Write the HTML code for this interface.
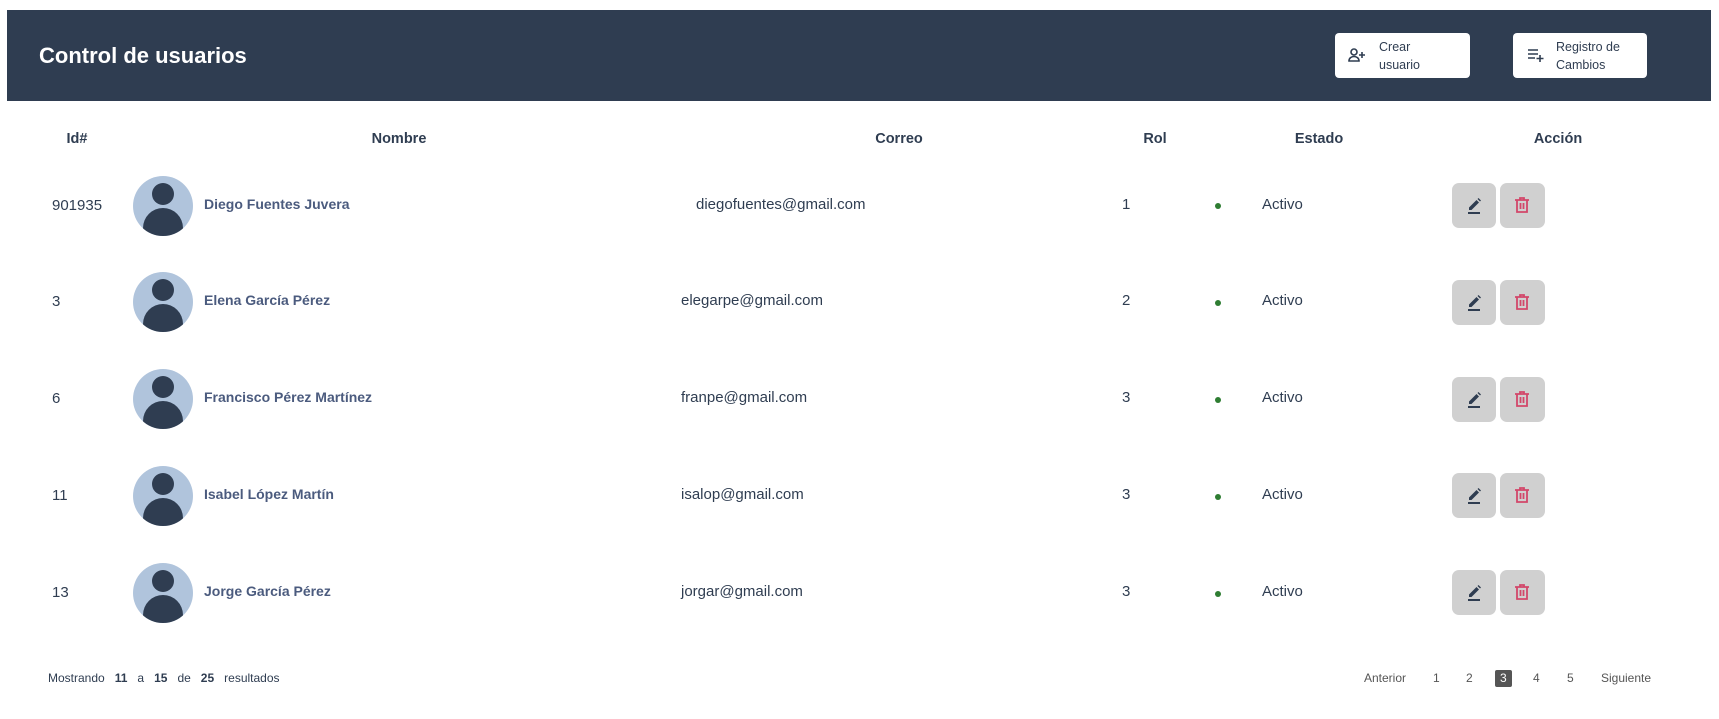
<!DOCTYPE html>
<html><head><meta charset="utf-8"><style>
*{margin:0;padding:0;box-sizing:border-box}
body{width:1719px;height:719px;background:#fff;font-family:"Liberation Sans",sans-serif;color:#2f3d51;position:relative;overflow:hidden}
.a{position:absolute;white-space:nowrap}
.hdr{left:7px;top:10px;width:1704px;height:91px;background:#2f3d51}
.title{left:39px;top:43px;font-size:22px;font-weight:bold;color:#fff}
.btn{background:#fff;border-radius:4px;height:45px;top:33px}
.btn span{position:absolute;font-size:12.5px;line-height:18px;color:#2f3d51}
.th{top:131px;font-size:14.5px;font-weight:bold;transform:translateX(-50%)}
.td{font-size:15px;color:#2f3d51}
.nm{font-size:14px;font-weight:bold;color:#4b5b7e}
.av{width:60px;height:60px;border-radius:50%;background:#b0c4dc;overflow:hidden}
.av:before{content:"";position:absolute;left:19px;top:7px;width:22px;height:22px;border-radius:50%;background:#2f3d51}
.av:after{content:"";position:absolute;left:10px;top:32px;width:40px;height:40px;border-radius:50%;background:#2f3d51}
.dot{width:6px;height:6px;border-radius:50%;background:#2e7d32}
.ab{width:44px;height:45px;background:#d0d0d0;border-radius:7px}
.ab svg{position:absolute;left:12px;top:12px}
.ft{top:671px;font-size:12px;color:#2f3d51}
</style></head><body>
<div class="a hdr"></div>
<div class="a title">Control de usuarios</div>
<div class="a btn" style="left:1335px;width:135px">
<svg class="a" style="left:13px;top:14px" width="18" height="16" viewBox="0 0 18 16"><circle cx="6" cy="5" r="3" fill="none" stroke="#2f3d51" stroke-width="1.6"/><path d="M1 14c0-3 2.5-4.5 5-4.5s5 1.5 5 4.5z" fill="none" stroke="#2f3d51" stroke-width="1.6"/><path d="M14 5v6M11 8h6" stroke="#2f3d51" stroke-width="1.6"/></svg>
<span style="left:44px;top:5px">Crear<br>usuario</span></div>
<div class="a btn" style="left:1513px;width:134px">
<svg class="a" style="left:14px;top:14px" width="18" height="16" viewBox="0 0 18 16"><path d="M1 3h10M1 7h10M1 11h7M13 8v7M9.5 11.5h7" stroke="#2f3d51" stroke-width="1.6"/></svg>
<span style="left:43px;top:5px">Registro de<br>Cambios</span></div>

<div class="a th" style="left:77px">Id#</div>
<div class="a th" style="left:399px">Nombre</div>
<div class="a th" style="left:899px">Correo</div>
<div class="a th" style="left:1155px">Rol</div>
<div class="a th" style="left:1319px">Estado</div>
<div class="a th" style="left:1558px">Acción</div>

<div class="a td" style="left:52px;top:197px">901935</div>
<div class="a av" style="left:133px;top:176px"></div>
<div class="a nm" style="left:204px;top:196px">Diego Fuentes Juvera</div>
<div class="a td" style="left:696px;top:196px">diegofuentes@gmail.com</div>
<div class="a td" style="left:1122px;top:196px">1</div>
<div class="a dot" style="left:1215px;top:203px"></div>
<div class="a td" style="left:1262px;top:196px">Activo</div>

<div class="a td" style="left:52px;top:293px">3</div>
<div class="a av" style="left:133px;top:272px"></div>
<div class="a nm" style="left:204px;top:292px">Elena García Pérez</div>
<div class="a td" style="left:681px;top:292px">elegarpe@gmail.com</div>
<div class="a td" style="left:1122px;top:292px">2</div>
<div class="a dot" style="left:1215px;top:300px"></div>
<div class="a td" style="left:1262px;top:292px">Activo</div>

<div class="a td" style="left:52px;top:390px">6</div>
<div class="a av" style="left:133px;top:369px"></div>
<div class="a nm" style="left:204px;top:389px">Francisco Pérez Martínez</div>
<div class="a td" style="left:681px;top:389px">franpe@gmail.com</div>
<div class="a td" style="left:1122px;top:389px">3</div>
<div class="a dot" style="left:1215px;top:397px"></div>
<div class="a td" style="left:1262px;top:389px">Activo</div>

<div class="a td" style="left:52px;top:487px">11</div>
<div class="a av" style="left:133px;top:466px"></div>
<div class="a nm" style="left:204px;top:486px">Isabel López Martín</div>
<div class="a td" style="left:681px;top:486px">isalop@gmail.com</div>
<div class="a td" style="left:1122px;top:486px">3</div>
<div class="a dot" style="left:1215px;top:494px"></div>
<div class="a td" style="left:1262px;top:486px">Activo</div>

<div class="a td" style="left:52px;top:584px">13</div>
<div class="a av" style="left:133px;top:563px"></div>
<div class="a nm" style="left:204px;top:583px">Jorge García Pérez</div>
<div class="a td" style="left:681px;top:583px">jorgar@gmail.com</div>
<div class="a td" style="left:1122px;top:583px">3</div>
<div class="a dot" style="left:1215px;top:591px"></div>
<div class="a td" style="left:1262px;top:583px">Activo</div>

<div id="acts"></div>
<script>
var ys=[183,280,377,473,570],h='';
ys.forEach(function(y){
h+='<div class="a ab" style="left:1452px;top:'+y+'px"><svg width="20" height="20" viewBox="0 0 20 20"><path d="M5 12.5L12.5 5l2.5 2.5L7.5 15H5z" fill="#2f3d51"/><path d="M13.5 4l1-1 2.5 2.5-1 1z" fill="#2f3d51"/><path d="M4 18h12" stroke="#2f3d51" stroke-width="2"/></svg></div>';
h+='<div class="a ab" style="left:1500px;top:'+y+'px;width:45px"><svg width="20" height="20" viewBox="0 0 20 20" fill="none" stroke="#d2476a" stroke-width="1.8"><path d="M3 5h14M8 5V3h4v2M5 5v12h10V5M8.5 8v6M11.5 8v6"/></svg></div>';
});
document.getElementById('acts').innerHTML=h;
</script>

<div class="a ft" style="left:48px">Mostrando &nbsp; <b>11</b> &nbsp; a &nbsp; <b>15</b> &nbsp; de &nbsp; <b>25</b> &nbsp; resultados</div>
<div class="a ft" style="left:1364px;color:#555">Anterior</div>
<div class="a ft" style="left:1433px;color:#555">1</div>
<div class="a ft" style="left:1466px;color:#555">2</div>
<div class="a" style="left:1495px;top:670px;width:17px;height:17px;background:#555;border-radius:2px"></div>
<div class="a ft" style="left:1500px;color:#fff">3</div>
<div class="a ft" style="left:1533px;color:#555">4</div>
<div class="a ft" style="left:1567px;color:#555">5</div>
<div class="a ft" style="left:1601px;color:#555">Siguiente</div>
</body></html>
